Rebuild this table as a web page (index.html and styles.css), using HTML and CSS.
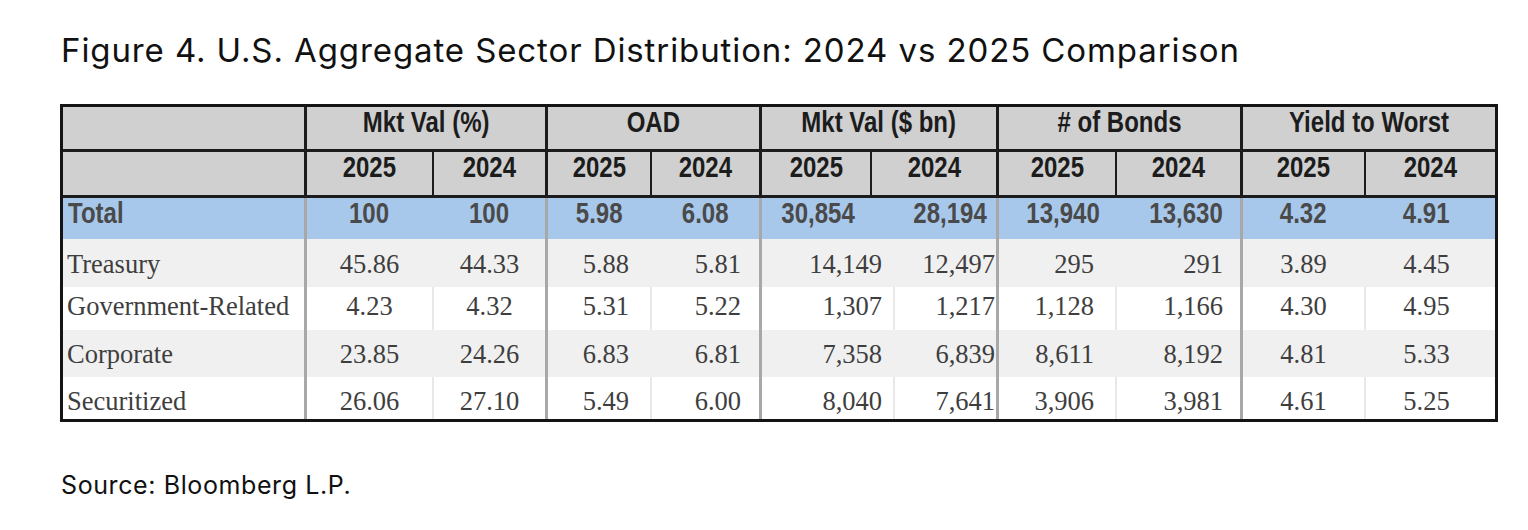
FILE: index.html
```html
<!DOCTYPE html>
<html lang="en">
<head>
<meta charset="utf-8">
<title>Figure 4. U.S. Aggregate Sector Distribution</title>
<link rel="stylesheet" href="styles.css">
</head>
<body>
<div class="figure">
  <h1 class="title">Figure 4. U.S. Aggregate Sector Distribution: 2024 vs 2025 Comparison</h1>
  <table class="sector">
    <colgroup>
      <col class="w0"><col class="w1"><col class="w2"><col class="w3"><col class="w4"><col class="w5"><col class="w5b"><col class="w6"><col class="w7"><col class="w8"><col class="w9"><col class="w10">
    </colgroup>
    <thead>
      <tr class="hr1">
        <th class="g"></th>
        <th class="g" colspan="2"><span class="nar">Mkt Val (%)</span></th>
        <th class="g" colspan="2"><span class="nar">OAD</span></th>
        <th class="g" colspan="3"><span class="nar">Mkt Val ($ bn)</span></th>
        <th class="g" colspan="2"><span class="nar"># of Bonds</span></th>
        <th class="last" colspan="2"><span class="nar">Yield to Worst</span></th>
      </tr>
      <tr class="hr2">
        <th class="g"></th>
        <th class="s"><span class="nar">2025</span></th><th class="g"><span class="nar">2024</span></th>
        <th class="s"><span class="nar">2025</span></th><th class="g"><span class="nar">2024</span></th>
        <th class="s"><span class="nar">2025</span></th><th class="g" colspan="2"><span class="nar">2024</span></th>
        <th class="s"><span class="nar">2025</span></th><th class="g"><span class="nar">2024</span></th>
        <th class="s"><span class="nar">2025</span></th><th class="last"><span class="nar">2024</span></th>
      </tr>
    </thead>
    <tbody>
      <tr class="total">
        <td class="g lab"><span class="nar">Total</span></td>
        <td class="s ctr"><span class="nar">100</span></td><td class="g ctr"><span class="nar">100</span></td>
        <td class="s ctr"><span class="nar">5.98</span></td><td class="g ctr"><span class="nar">6.08</span></td>
        <td class="s mv1" colspan="2"><span class="nar">30,854</span></td><td class="g mv2"><span class="nar">28,194</span></td>
        <td class="s nb1"><span class="nar">13,940</span></td><td class="g nb2"><span class="nar">13,630</span></td>
        <td class="s ctr"><span class="nar">4.32</span></td><td class="last ctr y2"><span class="nar">4.91</span></td>
      </tr>
      <tr class="row r1 shade">
        <td class="g lab">Treasury</td>
        <td class="s ctr">45.86</td><td class="g ctr">44.33</td>
        <td class="s oad1">5.88</td><td class="g oad2">5.81</td>
        <td class="s mv1" colspan="2">14,149</td><td class="g mv2">12,497</td>
        <td class="s nb1">295</td><td class="g nb2">291</td>
        <td class="s ctr">3.89</td><td class="last ctr y2">4.45</td>
      </tr>
      <tr class="row r2 plain">
        <td class="g lab">Government-Related</td>
        <td class="s ctr">4.23</td><td class="g ctr">4.32</td>
        <td class="s oad1">5.31</td><td class="g oad2">5.22</td>
        <td class="s mv1" colspan="2">1,307</td><td class="g mv2">1,217</td>
        <td class="s nb1">1,128</td><td class="g nb2">1,166</td>
        <td class="s ctr">4.30</td><td class="last ctr y2">4.95</td>
      </tr>
      <tr class="row r3 shade">
        <td class="g lab">Corporate</td>
        <td class="s ctr">23.85</td><td class="g ctr">24.26</td>
        <td class="s oad1">6.83</td><td class="g oad2">6.81</td>
        <td class="s mv1" colspan="2">7,358</td><td class="g mv2">6,839</td>
        <td class="s nb1">8,611</td><td class="g nb2">8,192</td>
        <td class="s ctr">4.81</td><td class="last ctr y2">5.33</td>
      </tr>
      <tr class="row r4 plain">
        <td class="g lab">Securitized</td>
        <td class="s ctr">26.06</td><td class="g ctr">27.10</td>
        <td class="s oad1">5.49</td><td class="g oad2">6.00</td>
        <td class="s mv1" colspan="2">8,040</td><td class="g mv2">7,641</td>
        <td class="s nb1">3,906</td><td class="g nb2">3,981</td>
        <td class="s ctr">4.61</td><td class="last ctr y2">5.25</td>
      </tr>
    </tbody>
  </table>
  <p class="source">Source: Bloomberg L.P.</p>
</div>
</body>
</html>
```

FILE: styles.css
```css
html, body {
  margin: 0;
  padding: 0;
  background: #ffffff;
}

.figure {
  padding: 30px 0 0 60px;
}

.title {
  margin: 0 0 34px 1px;
  font-family: Inter, "Noto Sans", sans-serif;
  font-weight: 400;
  font-size: 33px;
  letter-spacing: 0.9px;
  line-height: 40px;
  color: #111111;
}

.sector {
  width: 1438px;
  table-layout: fixed;
  border-collapse: separate;
  border-spacing: 0;
  border: 3px solid #141414;
}

.w0 { width: 244px; }
.w1 { width: 127px; }
.w2 { width: 114px; }
.w3 { width: 104px; }
.w4 { width: 110px; }
.w5 { width: 110px; }
.w5b { width: 23px; }
.w6 { width: 104px; }
.w7 { width: 118px; }
.w8 { width: 126px; }
.w9 { width: 123px; }
.w10 { width: 129px; }

.sector th,
.sector td {
  padding: 0;
  margin: 0;
  white-space: nowrap;
  overflow: visible;
  vertical-align: top;
}

/* condensed bold text: Liberation Sans Bold squeezed horizontally */
.nar {
  display: inline-block;
  transform: scaleX(0.8);
  transform-origin: 50% 50%;
}

/* header */
.sector th {
  background: #d0d0d0;
  color: #1c1c1c;
  font-family: "Liberation Sans", Arial, sans-serif;
  font-weight: 700;
  font-size: 30px;
  line-height: 30px;
  text-align: center;
  border-bottom: 3px solid #1c1c1c;
}

.hr1 th { padding-bottom: 12px; }
.hr2 th { padding-bottom: 13px; }

.sector th.g { border-right: 3px solid #1c1c1c; }
.sector th.s { border-right: 2px solid #1c1c1c; }

/* body */
.sector td.g { border-right: 3px solid #a8a8a8; }
.sector td.s { border-right: 2px solid transparent; }
.sector tr.plain td.s { border-right-color: #e8e8e8; }

.total td {
  background: #a8c8eb;
  color: #4a4a4a;
  font-family: "Liberation Sans", Arial, sans-serif;
  font-weight: 700;
  font-size: 30px;
  line-height: 30px;
  padding-bottom: 11px;
}

.row td {
  color: #3e3e3e;
  font-family: "Liberation Serif", "Times New Roman", serif;
  font-size: 26.5px;
  line-height: 30px;
}

.shade td { background: #f0f0f0; }
.plain td { background: #ffffff; }

.r1 td { padding-top: 10px; padding-bottom: 8px; }
.r2 td { padding-top: 4px; padding-bottom: 9px; }
.r3 td { padding-top: 9px; padding-bottom: 8px; }
.r4 td { padding-top: 9px; padding-bottom: 3px; }

.sector td.lab { text-align: left; padding-left: 4px; }
.total td.lab { padding-left: 5px; }
.total td.lab .nar { transform-origin: 0 50%; }

.sector td.ctr { text-align: center; }
.sector td.y2 { padding-right: 8px; }

.sector td.oad1 { text-align: right; padding-right: 21px; }
.sector td.oad2 { text-align: right; padding-right: 18px; }
.sector td.mv1 { text-align: right; padding-right: 11px; }
.sector td.mv2 { text-align: right; padding-right: 1px; }
.sector td.nb1 { text-align: right; padding-right: 21px; }
.sector td.nb2 { text-align: right; padding-right: 17px; }

.total td.mv1 { padding-right: 38px; }
.total td.mv2 { padding-right: 14px; }
.total td.nb1 { padding-right: 15px; }
.total td.nb2 { padding-right: 17px; }
.total td.mv1 .nar,
.total td.mv2 .nar,
.total td.nb1 .nar,
.total td.nb2 .nar { transform-origin: 100% 50%; }

.source {
  margin: 48px 0 0 1px;
  font-family: Inter, "Noto Sans", sans-serif;
  font-size: 25px;
  letter-spacing: 0.6px;
  line-height: 30px;
  color: #111111;
}
```
